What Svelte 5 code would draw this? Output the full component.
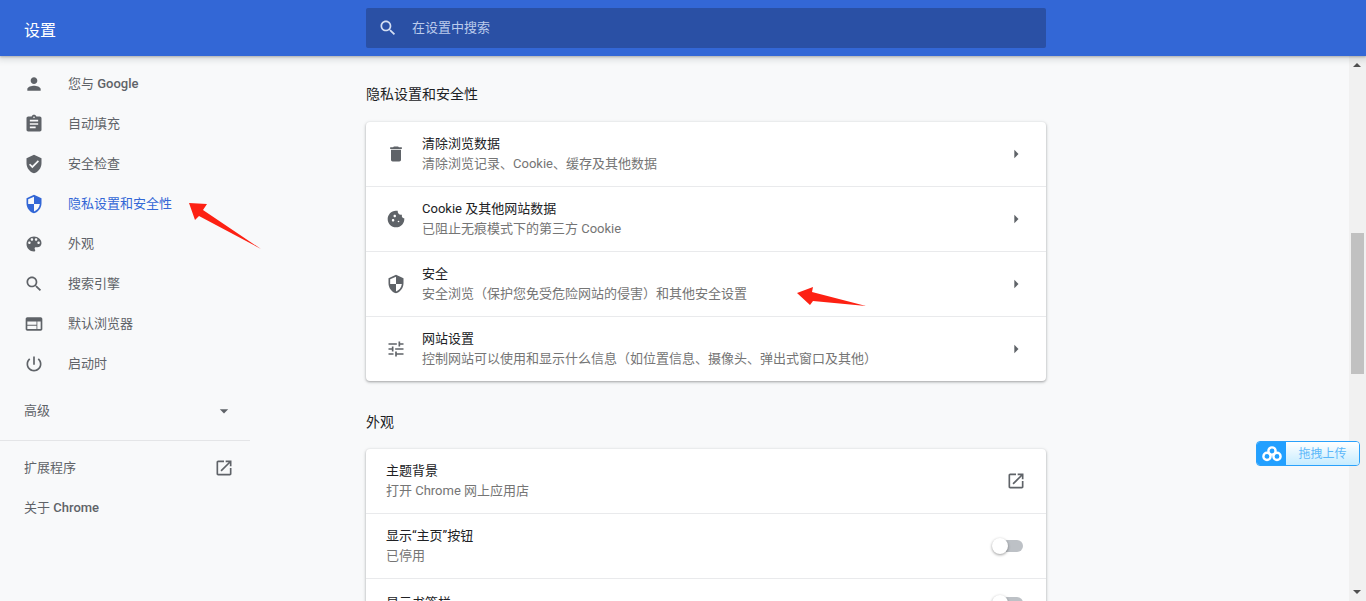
<script>
  const icons = {
    person: "M12 12c2.21 0 4-1.79 4-4s-1.79-4-4-4-4 1.79-4 4 1.79 4 4 4zm0 2c-2.67 0-8 1.34-8 4v2h16v-2c0-2.66-5.33-4-8-4z",
    assignment: "M19 3h-4.18C14.4 1.84 13.3 1 12 1c-1.3 0-2.4.84-2.82 2H5c-1.1 0-2 .9-2 2v14c0 1.1.9 2 2 2h14c1.1 0 2-.9 2-2V5c0-1.1-.9-2-2-2zm-7 0c.55 0 1 .45 1 1s-.45 1-1 1-1-.45-1-1 .45-1 1-1zm2 14H7v-2h7v2zm3-4H7v-2h10v2zm0-4H7V7h10v2z",
    verified: "M12 1L3 5v6c0 5.55 3.84 10.74 9 12 5.16-1.26 9-6.45 9-12V5l-9-4zm-2 16l-4-4 1.41-1.41L10 14.17l6.59-6.59L18 9l-8 8z",
    shield: "M12 1L3 5v6c0 5.55 3.84 10.74 9 12 5.16-1.26 9-6.45 9-12V5l-9-4zm0 10.99h7c-.53 4.12-3.28 7.79-7 8.94V12H5V6.3l7-3.11v8.8z",
    palette: "M12 3c-4.97 0-9 4.03-9 9s4.03 9 9 9c.83 0 1.5-.67 1.5-1.5 0-.39-.15-.74-.39-1.01-.23-.26-.38-.61-.38-.99 0-.83.67-1.5 1.5-1.5H16c2.76 0 5-2.24 5-5 0-4.42-4.03-8-9-8zm-5.5 9c-.83 0-1.5-.67-1.5-1.5S5.67 9 6.5 9 8 9.67 8 10.5 7.33 12 6.5 12zm3-4C8.67 8 8 7.33 8 6.5S8.67 5 9.5 5s1.5.67 1.5 1.5S10.33 8 9.5 8zm5 0c-.83 0-1.5-.67-1.5-1.5S13.67 5 14.5 5s1.5.67 1.5 1.5S15.33 8 14.5 8zm3 4c-.83 0-1.5-.67-1.5-1.5S16.67 9 17.5 9s1.5.67 1.5 1.5-.67 1.5-1.5 1.5z",
    search: "M15.5 14h-.79l-.28-.27C15.41 12.59 16 11.11 16 9.5 16 5.91 13.09 3 9.5 3S3 5.91 3 9.5 5.91 16 9.5 16c1.61 0 3.09-.59 4.23-1.57l.27.28v.79l5 4.99L20.49 19l-4.99-5zm-6 0C7.01 14 5 11.99 5 9.5S7.01 5 9.5 5 14 7.01 14 9.5 11.99 14 9.5 14z",
    browser: "M20 4H4c-1.1 0-1.99.9-1.99 2L2 18c0 1.1.9 2 2 2h16c1.1 0 2-.9 2-2V6c0-1.1-.9-2-2-2zm-5 14H4v-4h11v4zm0-5H4V9h11v4zm5 5h-4V9h4v9z",
    power: "M13 3h-2v10h2V3zm4.83 2.17l-1.42 1.42C17.99 7.86 19 9.81 19 12c0 3.87-3.13 7-7 7s-7-3.13-7-7c0-2.19 1.01-4.14 2.58-5.42L6.17 5.17C4.23 6.82 3 9.26 3 12c0 4.97 4.03 9 9 9s9-4.03 9-9c0-2.74-1.23-5.18-3.17-6.83z",
    open: "M19 19H5V5h7V3H5c-1.11 0-2 .9-2 2v14c0 1.1.89 2 2 2h14c1.1 0 2-.9 2-2v-7h-2v7zM14 3v2h3.59l-9.83 9.83 1.41 1.41L19 6.41V10h2V3h-7z",
    trash: "M6 19c0 1.1.9 2 2 2h8c1.1 0 2-.9 2-2V7H6v12zM19 4h-3.5l-1-1h-5l-1 1H5v2h14V4z",
    cookie: "M21.95 10.99c-1.79-.03-3.7-1.95-2.68-4.22-2.97 1-5.78-1.59-5.19-4.56C7.11.74 2 6.41 2 12c0 5.52 4.48 10 10 10 5.89 0 10.54-5.08 9.95-11.01zM8.5 15c-.83 0-1.5-.67-1.5-1.5S7.67 12 8.5 12s1.5.67 1.5 1.5S9.33 15 8.5 15zm2-5C9.67 10 9 9.33 9 8.5S9.67 7 10.5 7s1.5.67 1.5 1.5-.67 1.5-1.5 1.5zm4.5 6c-.55 0-1-.45-1-1s.45-1 1-1 1 .45 1 1-.45 1-1 1z",
    tune: "M3 17v2h6v-2H3zM3 5v2h10V5H3zm10 16v-2h8v-2h-8v-2h-2v6h2zM7 9v2H3v2h4v2h2V9H7zm14 4v-2H11v2h10zm-6-4h2V7h4V5h-4V3h-2v6z",
    right: "M10 7l5 5-5 5z",
    down: "M7 10l5 5 5-5z",
  };

  const nav = [
    { icon: "person", label: "您与", latin: "Google" },
    { icon: "assignment", label: "自动填充" },
    { icon: "verified", label: "安全检查" },
    { icon: "shield", label: "隐私设置和安全性", active: true },
    { icon: "palette", label: "外观" },
    { icon: "search", label: "搜索引擎" },
    { icon: "browser", label: "默认浏览器" },
    { icon: "power", label: "启动时" },
  ];

  const privacy = [
    { icon: "trash", title: "清除浏览数据", sub: "清除浏览记录、Cookie、缓存及其他数据" },
    { icon: "cookie", title: "Cookie 及其他网站数据", sub: "已阻止无痕模式下的第三方 Cookie" },
    { icon: "shield", title: "安全", sub: "安全浏览（保护您免受危险网站的侵害）和其他安全设置" },
    { icon: "tune", title: "网站设置", sub: "控制网站可以使用和显示什么信息（如位置信息、摄像头、弹出式窗口及其他）" },
  ];
</script>

{#snippet icon(name, cls = "")}
  <svg class="icon {cls}" viewBox="0 0 24 24"><path d={icons[name]} /></svg>
{/snippet}

<div class="page">
  <header class="topbar">
    <h1>设置</h1>
    <div class="searchbox">
      {@render icon("search", "search-icon")}
      <span class="lift">在设置中搜索</span>
    </div>
  </header>

  <div class="body">
    <aside class="sidebar">
      <nav>
        {#each nav as item}
          <div class="nav-item" class:active={item.active}>
            {@render icon(item.icon)}
            <span class="lift">{item.label}{#if item.latin}{" "}<b>{item.latin}</b>{/if}</span>
          </div>
        {/each}
      </nav>
      <div class="side-row advanced">
        <span class="lift">高级</span>
        {@render icon("down")}
      </div>
      <div class="divider"></div>
      <div class="side-row">
        <span class="lift">扩展程序</span>
        {@render icon("open")}
      </div>
      <div class="side-row">
        <span class="lift">关于 <b>Chrome</b></span>
      </div>
    </aside>

    <main class="content">
      <h2>隐私设置和安全性</h2>
      <section class="card">
        {#each privacy as row}
          <div class="row">
            {@render icon(row.icon)}
            <div class="row-text with-icon">
              <div class="title">{row.title}</div>
              <div class="sub">{row.sub}</div>
            </div>
            {@render icon("right")}
          </div>
        {/each}
      </section>

      <h2 class="second">外观</h2>
      <section class="card">
        <div class="row">
          <div class="row-text">
            <div class="title">主题背景</div>
            <div class="sub">打开 Chrome 网上应用店</div>
          </div>
          {@render icon("open")}
        </div>
        <div class="row">
          <div class="row-text">
            <div class="title">显示“主页”按钮</div>
            <div class="sub">已停用</div>
          </div>
          <div class="toggle"><i></i></div>
        </div>
        <div class="row short">
          <div class="row-text">
            <div class="title">显示书签栏</div>
          </div>
          <div class="toggle"><i></i></div>
        </div>
      </section>
    </main>

    <div class="scrollbar">
      <div class="arrow-up"></div>
      <div class="thumb"></div>
      <div class="arrow-down"></div>
    </div>
  </div>

  <svg class="marks" viewBox="0 0 1366 601">
    <polygon points="189,203 207,204 203,210 261,249 199,216 195,220" />
    <polygon points="797,293 813,287 812,292 866,306 813,301 810,305" />
  </svg>

  <div class="upload">
    <div class="upload-logo">
      <svg viewBox="0 0 20 16">
        <circle cx="10" cy="5" r="3.6" />
        <circle cx="5" cy="10.4" r="3.6" />
        <circle cx="15" cy="10.4" r="3.6" />
      </svg>
    </div>
    <div class="upload-text">拖拽上传</div>
  </div>
</div>

<style>
  :global(body) {
    margin: 0;
    background: #f8f9fa;
  }

  .page {
    position: relative;
    display: flex;
    flex-direction: column;
    width: 1366px;
    height: 601px;
    overflow: hidden;
    background: #f8f9fa;
    font-family: Roboto, "Noto Sans CJK SC", sans-serif;
    font-size: 13px;
    color: #5f6368;
  }

  .icon {
    flex: none;
    width: 20px;
    height: 20px;
    fill: #5f6368;
  }

  b {
    font-weight: 500;
  }

  /* the CJK face sits low in its line box */
  .lift {
    padding-bottom: 3px;
  }

  .topbar {
    position: relative;
    z-index: 2;
    flex: none;
    display: flex;
    align-items: center;
    height: 56px;
    background: #3367d6;
    box-shadow: 0 1px 2px rgba(60, 64, 67, 0.3), 0 2px 6px 2px rgba(60, 64, 67, 0.15);
  }

  h1 {
    width: 342px;
    margin: 2px 0 0;
    padding-left: 24px;
    box-sizing: border-box;
    font-size: 16px;
    font-weight: 400;
    color: #fff;
  }

  .searchbox {
    display: flex;
    align-items: center;
    gap: 14px;
    width: 680px;
    height: 40px;
    margin-left: 24px;
    padding-left: 12px;
    box-sizing: border-box;
    border-radius: 2px;
    background: #2a50a5;
    color: #bbcbec;
    margin-top: -1px;
  }

  .searchbox :global(.search-icon) {
    fill: #d3def3;
  }

  .body {
    flex: 1;
    display: flex;
    min-height: 0;
  }

  .sidebar {
    flex: none;
    width: 250px;
    padding-top: 8px;
  }

  .nav-item {
    display: flex;
    align-items: center;
    gap: 24px;
    height: 40px;
    padding-left: 24px;
  }

  .nav-item.active {
    color: #3367d6;
  }

  .nav-item.active :global(.icon) {
    fill: #3367d6;
  }

  .side-row {
    display: flex;
    align-items: center;
    justify-content: space-between;
    height: 40px;
    padding: 0 16px 0 24px;
  }

  .advanced {
    margin-top: 7px;
    margin-bottom: 9px;
  }

  .divider {
    height: 1px;
    margin-bottom: 7px;
    background: #e4e5e7;
  }

  .content {
    flex: 1;
    min-width: 0;
    padding-left: 116px;
  }

  h2 {
    width: 680px;
    margin: 0;
    padding: 28px 0 18px;
    font-size: 14px;
    line-height: 20px;
    font-weight: 400;
    color: #202124;
  }

  h2.second {
    padding: 31px 0 17px;
  }

  .card {
    width: 680px;
    border-radius: 4px;
    background: #fff;
    box-shadow: 0 1px 2px rgba(60, 64, 67, 0.3), 0 1px 3px 1px rgba(60, 64, 67, 0.15);
  }

  .row {
    display: flex;
    align-items: center;
    gap: 16px;
    height: 64px;
    padding: 0 20px;
  }

  .row.short {
    height: 48px;
  }

  .row + .row {
    border-top: 1px solid #e9eaec;
  }

  .row-text {
    flex: 1;
    margin-top: -1px;
    line-height: 20px;
  }

  .title {
    color: #202124;
  }

  .sub {
    color: #757575;
  }

  .toggle {
    position: relative;
    flex: none;
    width: 24px;
    height: 12px;
    margin-right: 3px;
    border-radius: 6px;
    background: #bdc1c6;
  }

  .toggle i {
    position: absolute;
    left: -7px;
    top: -2px;
    width: 16px;
    height: 16px;
    border-radius: 50%;
    background: #fff;
    box-shadow: 0 1px 3px rgba(0, 0, 0, 0.4);
  }

  .scrollbar {
    position: relative;
    flex: none;
    width: 17px;
    background: #f1f1f1;
  }

  .thumb {
    position: absolute;
    left: 2px;
    top: 177px;
    width: 13px;
    height: 141px;
    background: #c1c1c1;
  }

  .arrow-up {
    position: absolute;
    left: 4px;
    top: 7px;
    border-left: 4px solid transparent;
    border-right: 4px solid transparent;
    border-bottom: 4px solid #505050;
  }

  .arrow-down {
    position: absolute;
    left: 4px;
    bottom: 7px;
    border-left: 4px solid transparent;
    border-right: 4px solid transparent;
    border-top: 4px solid #505050;
  }

  .marks {
    position: absolute;
    inset: 0;
    z-index: 3;
    width: 1366px;
    height: 601px;
    fill: #fd2113;
    pointer-events: none;
  }

  .upload {
    position: absolute;
    z-index: 4;
    left: 1256px;
    top: 441px;
    display: flex;
    width: 104px;
    height: 25px;
    box-sizing: border-box;
    border: 1px solid #2aa1fb;
    border-radius: 4px;
    overflow: hidden;
  }

  .upload-logo {
    flex: none;
    display: flex;
    align-items: center;
    justify-content: center;
    width: 29px;
    background: #22a0ff;
  }

  .upload-logo svg {
    width: 20px;
    height: 16px;
    fill: none;
    stroke: #fff;
    stroke-width: 2.4;
  }

  .upload-text {
    flex: 1;
    text-align: center;
    line-height: 24px;
    font-size: 12px;
    color: #5cb8fa;
    background: linear-gradient(#fff, #c6ecff);
  }
</style>
